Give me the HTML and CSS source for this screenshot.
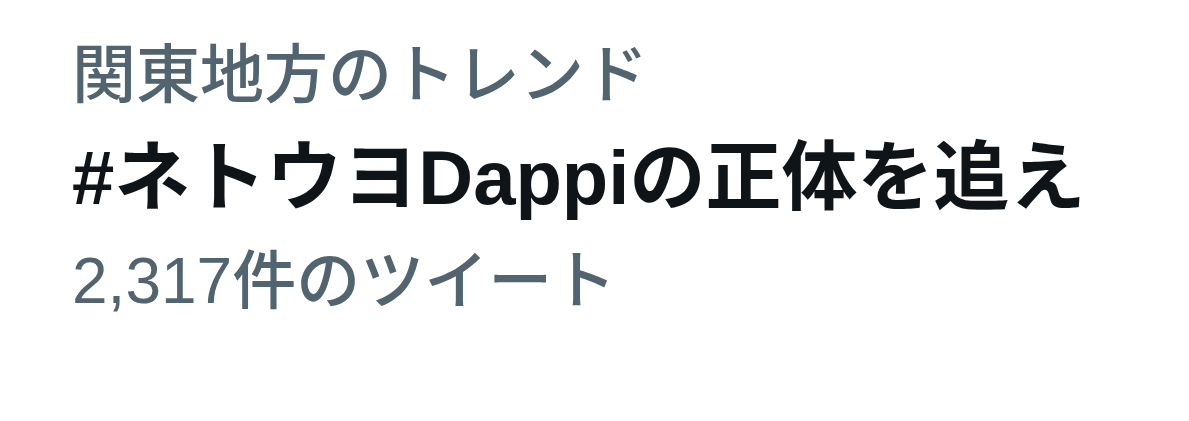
FILE: index.html
```html
<!DOCTYPE html>
<html lang="ja">
<head>
    <meta charset="UTF-8">
    <title>トレンド</title>
    <link rel="stylesheet" href="styles.css">
</head>
<body>
    <div class="trend">
        <div class="trend-context">関東地方のトレンド</div>
        <div class="trend-name">#ネトウヨDappiの正体を追え</div>
        <div class="trend-count">2,317件のツイート</div>
    </div>
</body>
</html>
```

FILE: styles.css
```css
body {
    margin: 0;
    background-color: #fff;
    font-family: "Liberation Sans", "Noto Sans CJK JP", sans-serif;
}
.trend {
    padding: 27px 0 0 72px;
}
.trend-context {
    font-size: 64px;
    line-height: 96px;
    font-weight: 500;
    color: #536471;
}
.trend-name {
    font-size: 76px;
    line-height: 109px;
    font-weight: bold;
    color: #0f1419;
}
.trend-count {
    font-size: 64px;
    line-height: 98px;
    font-weight: 500;
    color: #536471;
}
```
